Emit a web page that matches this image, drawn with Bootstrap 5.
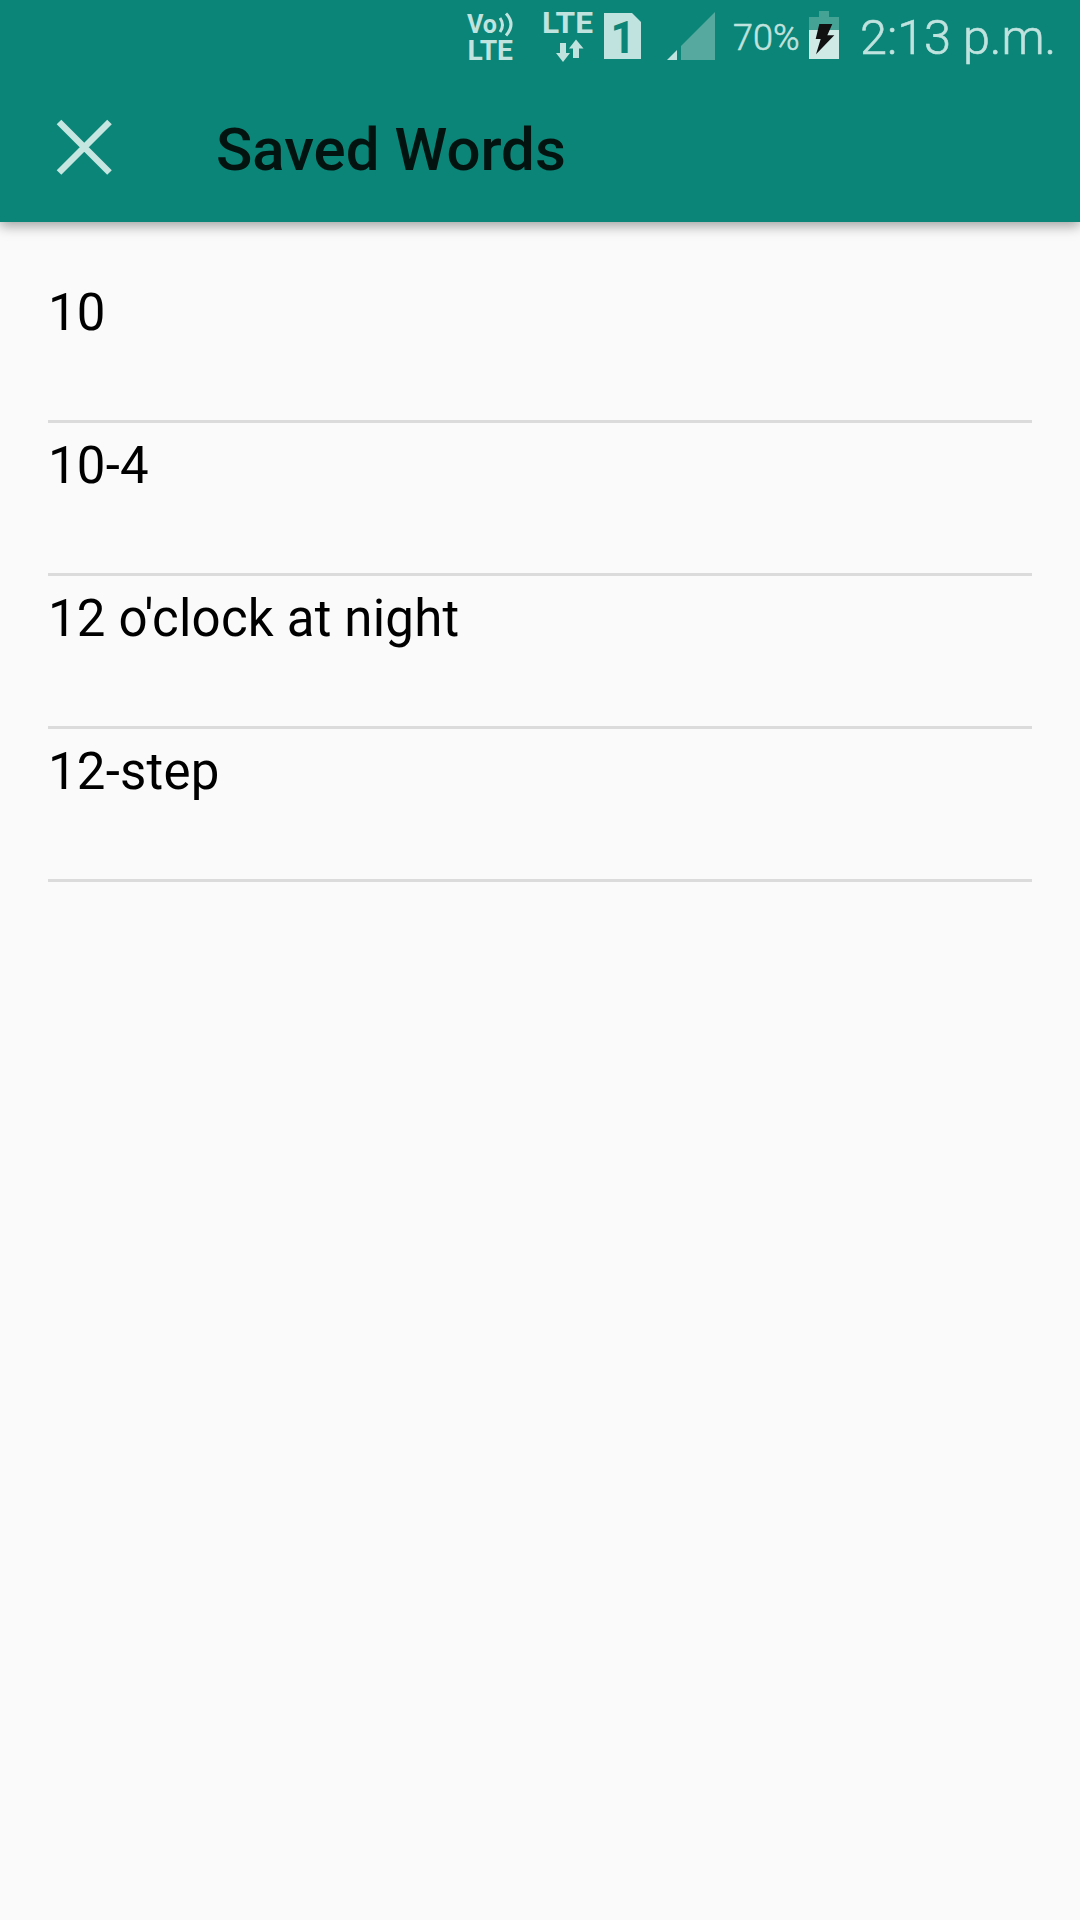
<!DOCTYPE html>
<html lang="en">
<head>
<meta charset="utf-8">
<meta name="viewport" content="width=device-width, initial-scale=1">
<title>Saved Words</title>
<link href="https://cdn.jsdelivr.net/npm/bootstrap@5.3.0/dist/css/bootstrap.min.css" rel="stylesheet">
<style>
  body { background: #fafafa; color: #000; font-family: Roboto, "Liberation Sans", sans-serif; min-height: 1920px; }
  .app-header { background: #0b8577; height: 222px; box-shadow: 0 4px 12px rgba(0,0,0,.36); }
  .status-bar { height: 75px; padding-right: 25px; color: #c1e3df; }
  .status-bar svg { display: block; fill: #c1e3df; font-family: Roboto, sans-serif; font-weight: 700; }
  .battery-level, .clock { font-weight: 300; -webkit-text-stroke: .6px #c1e3df; }
  .battery-level { font-size: 36px; line-height: 77px; width: 67px; margin: 0 9px 0 17px; }
  .clock { font-size: 48.6px; line-height: 76px; width: 195px; margin-left: 21px; }
  .title-bar { height: 147px; padding-left: 56px; }
  .close-btn { width: 56px; height: 56px; margin-top: 44px; }
  .page-title { font-size: 60px; font-weight: 500; line-height: 70px; color: #021310; margin: 40px 0 0 104px; }
  .word-list { padding: 54px 48px 0; }
  .word-item { height: 153px; border-bottom: 3px solid #dbdbdb; font-size: 51px; letter-spacing: .2px; line-height: 60px; padding-top: 13px; }
  .word-item:first-child { height: 147px; padding-top: 7px; }
</style>
</head>
<body>
<header class="app-header">
  <div class="status-bar d-flex justify-content-end align-items-start text-nowrap">
    <svg width="52" height="75" viewBox="464 0 52 75" class="me-4">
      <text x="467" y="33" font-size="25" textLength="30" lengthAdjust="spacingAndGlyphs">Vo</text>
      <path d="M500 18q5 7 0 14M506 13.500q10 10.500 0 22" fill="none" stroke="#c1e3df" stroke-width="3"/>
      <text x="467.500" y="60" font-size="27" textLength="45.500" lengthAdjust="spacingAndGlyphs">LTE</text>
    </svg>
    <svg width="102" height="75" viewBox="540 0 102 75">
      <text x="542" y="33" font-size="29" textLength="51" lengthAdjust="spacingAndGlyphs">LTE</text>
      <path d="M560 43h6v10h4l-7 9-7-9h4zM576 39.500l7.500 9H579v9.500h-6v-9.500h-4z"/>
      <path fill-rule="evenodd" d="M604 13h28l9 9v37h-37z"/>
      <text x="610.500" y="52.700" font-size="43.500" style="fill:#0b8577">1</text>
    </svg>
    <svg width="50" height="75" viewBox="666 0 50 75" style="margin-left:24px">
      <path d="M667 60l10-10v10z"/><path d="M681 60V46l34-34v48z" fill="#55a99e"/>
    </svg>
    <span class="battery-level">70%</span>
    <svg width="30" height="75" viewBox="809 0 30 75">
      <path d="M819 11h10v6h10v13h-30V17h10z" fill="#45a396"/>
      <path d="M809 30h30v29h-30z" fill="#cfe9e5"/>
      <path d="M819.300 24h13l-5 11.300h7L816 54.300l4.700-15.300h-5z" fill="#111"/>
    </svg>
    <span class="clock">2:13 p.m.</span>
  </div>
  <div class="title-bar d-flex align-items-start">
    <button type="button" class="btn p-0 border-0 close-btn" aria-label="Close">
      <svg class="d-block" width="56" height="56" viewBox="56 119 56 56"><path d="M59 122l50.500 50.500M109.500 122L59 172.500" stroke="#c5e6e1" stroke-width="6.500" fill="none"/></svg>
    </button>
    <h1 class="page-title">Saved Words</h1>
  </div>
</header>
<main>
  <ul class="list-unstyled word-list mb-0">
    <li class="word-item">10</li>
    <li class="word-item">10-4</li>
    <li class="word-item">12 o'clock at night</li>
    <li class="word-item">12-step</li>
  </ul>
</main>
<script src="https://cdn.jsdelivr.net/npm/bootstrap@5.3.0/dist/js/bootstrap.bundle.min.js"></script>
</body>
</html>
